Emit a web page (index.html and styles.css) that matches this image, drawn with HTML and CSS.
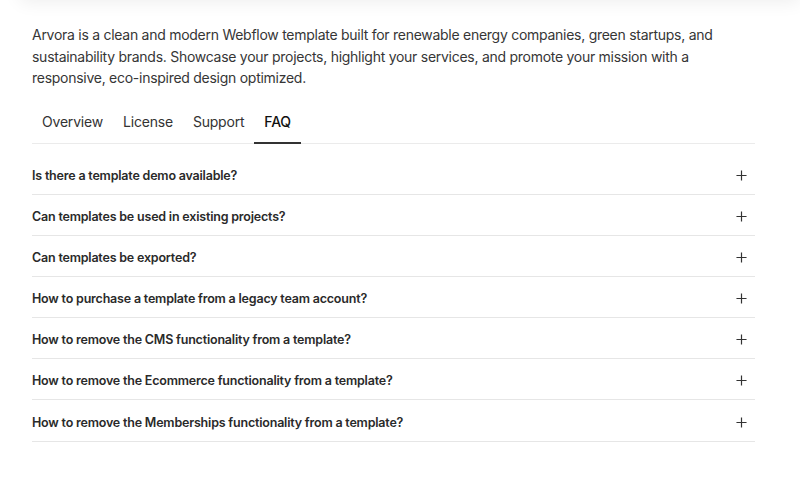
FILE: index.html
```html
<!DOCTYPE html>
<html lang="en">
<head>
<meta charset="utf-8">
<title>Arvora FAQ</title>
<link rel="stylesheet" href="styles.css">
</head>
<body>
<div class="topcard"></div>
<main class="content">
  <p class="intro">Arvora is a clean and modern Webflow template built for renewable energy companies, green startups, and sustainability brands. Showcase your projects, highlight your services, and promote your mission with a responsive, eco-inspired design optimized.</p>
  <nav class="tabs">
    <span class="tab">Overview</span>
    <span class="tab">License</span>
    <span class="tab">Support</span>
    <span class="tab active">FAQ</span>
  </nav>
  <ul class="faq">
    <li class="row"><span>Is there a template demo available?</span><svg class="plus" viewBox="0 0 12 12"><path d="M6 0.5V11.5M0.5 6H11.5"/></svg></li>
    <li class="row"><span>Can templates be used in existing projects?</span><svg class="plus" viewBox="0 0 12 12"><path d="M6 0.5V11.5M0.5 6H11.5"/></svg></li>
    <li class="row"><span>Can templates be exported?</span><svg class="plus" viewBox="0 0 12 12"><path d="M6 0.5V11.5M0.5 6H11.5"/></svg></li>
    <li class="row"><span>How to purchase a template from a legacy team account?</span><svg class="plus" viewBox="0 0 12 12"><path d="M6 0.5V11.5M0.5 6H11.5"/></svg></li>
    <li class="row"><span>How to remove the CMS functionality from a template?</span><svg class="plus" viewBox="0 0 12 12"><path d="M6 0.5V11.5M0.5 6H11.5"/></svg></li>
    <li class="row"><span>How to remove the Ecommerce functionality from a template?</span><svg class="plus" viewBox="0 0 12 12"><path d="M6 0.5V11.5M0.5 6H11.5"/></svg></li>
    <li class="row"><span>How to remove the Memberships functionality from a template?</span><svg class="plus" viewBox="0 0 12 12"><path d="M6 0.5V11.5M0.5 6H11.5"/></svg></li>
  </ul>
</main>
</body>
</html>
```
FILE: styles.css
```css
* { box-sizing: border-box; }
html, body { margin: 0; padding: 0; background: #fff; }
body {
  font-family: Inter, "Noto Sans", sans-serif;
  color: #2b2b2b;
  overflow: hidden;
}
.topcard {
  height: 40px;
  margin: -40px 0 0 20px;
  background: #fff;
  box-shadow: 0 2px 18px rgba(0, 0, 0, 0.07);
}
.content {
  width: 723px;
  margin: 0 0 0 32px;
}
.intro {
  margin: 24px 0 0;
  font-size: 14px;
  letter-spacing: -0.27px;
  line-height: 21.5px;
  color: #363636;
}
.tabs {
  display: flex;
  margin-top: 10px;
  border-bottom: 1px solid #ebebeb;
}
.tab {
  padding: 12px 10px 10px;
  font-size: 14px;
  letter-spacing: -0.2px;
  line-height: 21px;
  color: #333;
  border-bottom: 2px solid transparent;
  margin-bottom: -1px;
}
.tab.active {
  font-weight: 500;
  color: #111;
  border-bottom-color: #333;
}
.faq {
  list-style: none;
  margin: 10px 0 0;
  padding: 0;
}
.row {
  display: flex;
  align-items: center;
  justify-content: space-between;
  height: 41.17px;
  padding: 3px 8px 0 0;
  border-bottom: 1px solid #e6e6e6;
  font-size: 12.5px;
  font-weight: 600;
  letter-spacing: -0.2px;
  color: #2a2a2a;
}
.plus {
  width: 11px;
  height: 11px;
  fill: none;
  stroke: #333;
  stroke-width: 1.3;
}
```
